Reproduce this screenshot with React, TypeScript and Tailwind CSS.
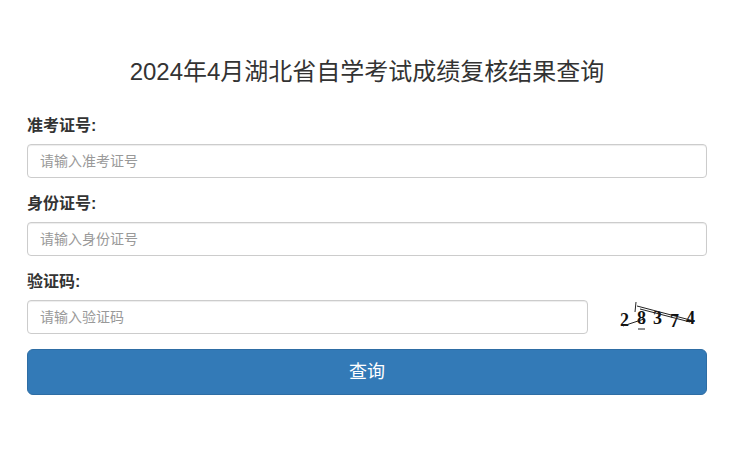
const inputCls =
  "block w-full h-[34px] px-3 text-[14px] text-[#555] bg-white border border-[#ccc] rounded-[4px] shadow-[inset_0_1px_1px_rgba(0,0,0,0.075)] placeholder:text-[#999] outline-none";

function Captcha() {
  return (
    <svg width="95" height="34" viewBox="0 0 95 34" className="block">
      <g fontFamily="'Liberation Serif', serif" fontWeight="bold" fontSize="18" fill="#111">
        <text x="10" y="25.5">2</text>
        <text x="27" y="23.5">8</text>
        <text x="43" y="23.5">3</text>
        <text x="60" y="26.5">7</text>
        <text x="76" y="23.5">4</text>
      </g>
      <g stroke="#222" strokeWidth="1" fill="none">
        <line x1="26" y1="2" x2="25" y2="12" />
        <line x1="27" y1="6" x2="84" y2="21" />
        <line x1="30" y1="9" x2="80" y2="22" />
        <line x1="13" y1="26" x2="34" y2="19" />
        <line x1="28" y1="29" x2="35" y2="29" />
      </g>
    </svg>
  );
}

export default function App() {
  return (
    <div className="w-[730px] h-[451px] bg-white pl-[27px] pr-[23px] pt-[59px] font-['Liberation_Sans','Noto_Sans_CJK_SC',sans-serif] text-[#333]">
      <h3 className="text-center text-[24px] leading-[26px] font-normal">
        2024年4月湖北省自学考试成绩复核结果查询
      </h3>

      <form className="mt-[31px] flex flex-col" onSubmit={(e) => e.preventDefault()}>
        <label className="block text-[16px] leading-[20px] font-bold mb-[8px]">准考证号:</label>
        <input className={inputCls} placeholder="请输入准考证号" />

        <label className="block text-[16px] leading-[20px] font-bold mt-[16px] mb-[8px]">身份证号:</label>
        <input className={inputCls} placeholder="请输入身份证号" />

        <label className="block text-[16px] leading-[20px] font-bold mt-[16px] mb-[8px]">验证码:</label>
        <div className="flex items-center">
          <div className="w-[561px]">
            <input className={inputCls} placeholder="请输入验证码" />
          </div>
          <div className="ml-[22px]">
            <Captcha />
          </div>
        </div>

        <button
          type="submit"
          className="mt-[15px] h-[46px] w-full rounded-[6px] bg-[#337ab7] border border-[#2e6da4] text-white text-[18px] leading-[44px]"
        >
          查询
        </button>
      </form>
    </div>
  );
}
